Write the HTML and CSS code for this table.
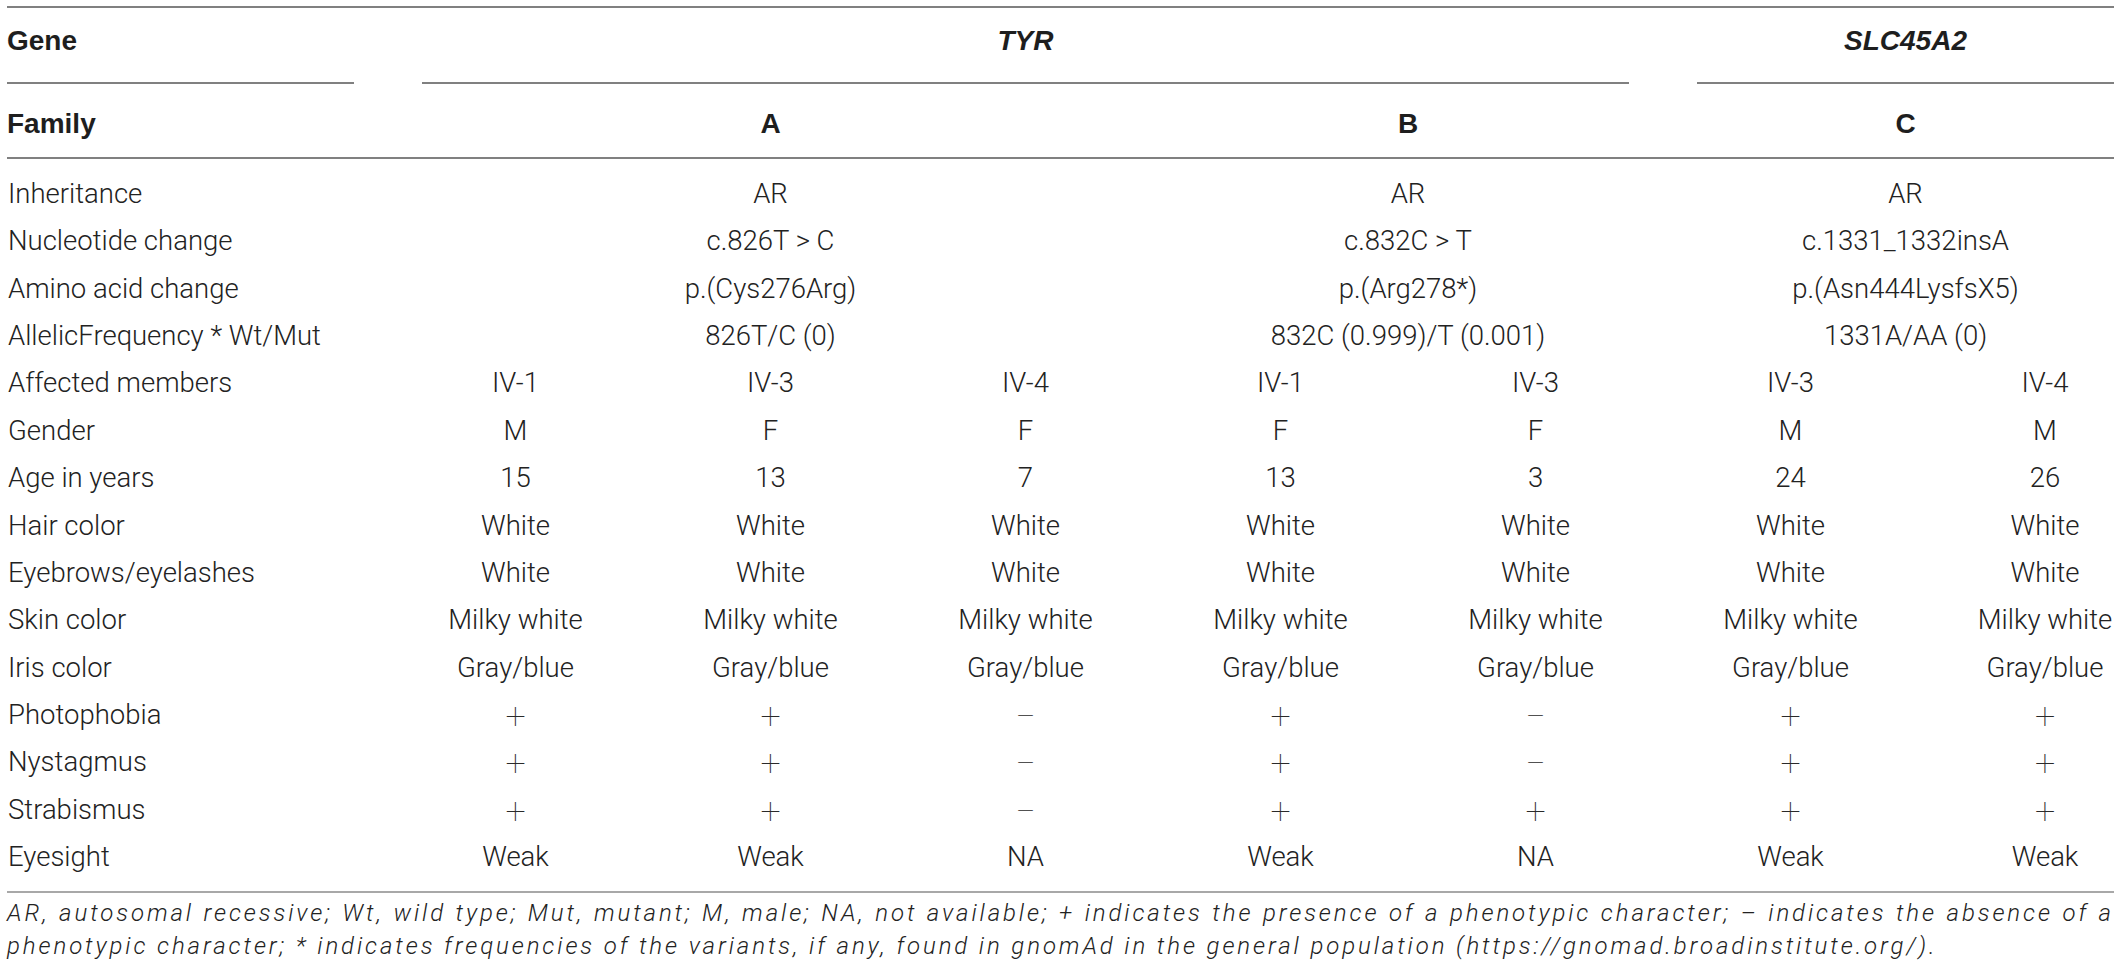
FILE: index.html
```html
<!DOCTYPE html>
<html>
<head>
<meta charset="UTF-8">
<title>Table 1 / Clinical and genetic features</title>
<link rel="stylesheet" href="styles.css">
</head>
<body>
	<div id="page">
		<table class="tableau">
			<colgroup>
				<col class="col_label">
				<col class="col_data">
				<col class="col_data">
				<col class="col_data">
				<col class="col_data">
				<col class="col_data">
				<col class="col_data">
				<col class="col_last">
			</colgroup>
			<thead>
				<tr class="ligne_gene">
					<th class="premier"><div class="filet">Gene</div></th>
					<th colspan="5"><div class="filet centre"><i>TYR</i></div></th>
					<th colspan="2" class="dernier"><div class="filet centre"><i>SLC45A2</i></div></th>
				</tr>
				<tr class="ligne_famille">
					<th class="premier">Family</th>
					<th colspan="3" class="centre">A</th>
					<th colspan="2" class="centre">B</th>
					<th colspan="2" class="centre fusion_c">C</th>
				</tr>
			</thead>
			<tbody>
				<tr class="debut">
					<td>Inheritance</td>
					<td colspan="3">AR</td>
					<td colspan="2">AR</td>
					<td colspan="2" class="fusion_c">AR</td>
				</tr>
				<tr>
					<td>Nucleotide change</td>
					<td colspan="3">c.826T &gt; C</td>
					<td colspan="2">c.832C &gt; T</td>
					<td colspan="2" class="fusion_c">c.1331_1332insA</td>
				</tr>
				<tr>
					<td>Amino acid change</td>
					<td colspan="3">p.(Cys276Arg)</td>
					<td colspan="2">p.(Arg278*)</td>
					<td colspan="2" class="fusion_c">p.(Asn444LysfsX5)</td>
				</tr>
				<tr>
					<td>AllelicFrequency * Wt/Mut</td>
					<td colspan="3">826T/C (0)</td>
					<td colspan="2">832C (0.999)/T (0.001)</td>
					<td colspan="2" class="fusion_c">1331A/AA (0)</td>
				</tr>
				<tr>
					<td>Affected members</td>
					<td>IV-1</td><td>IV-3</td><td>IV-4</td><td>IV-1</td><td>IV-3</td><td>IV-3</td><td class="der">IV-4</td>
				</tr>
				<tr>
					<td>Gender</td>
					<td>M</td><td>F</td><td>F</td><td>F</td><td>F</td><td>M</td><td class="der">M</td>
				</tr>
				<tr>
					<td>Age in years</td>
					<td>15</td><td>13</td><td>7</td><td>13</td><td>3</td><td>24</td><td class="der">26</td>
				</tr>
				<tr>
					<td>Hair color</td>
					<td>White</td><td>White</td><td>White</td><td>White</td><td>White</td><td>White</td><td class="der">White</td>
				</tr>
				<tr>
					<td>Eyebrows/eyelashes</td>
					<td>White</td><td>White</td><td>White</td><td>White</td><td>White</td><td>White</td><td class="der">White</td>
				</tr>
				<tr>
					<td>Skin color</td>
					<td>Milky white</td><td>Milky white</td><td>Milky white</td><td>Milky white</td><td>Milky white</td><td>Milky white</td><td class="der">Milky white</td>
				</tr>
				<tr>
					<td>Iris color</td>
					<td>Gray/blue</td><td>Gray/blue</td><td>Gray/blue</td><td>Gray/blue</td><td>Gray/blue</td><td>Gray/blue</td><td class="der">Gray/blue</td>
				</tr>
				<tr>
					<td>Photophobia</td>
					<td><span class="signe">+</span></td><td><span class="signe">+</span></td><td><span class="signe">&minus;</span></td><td><span class="signe">+</span></td><td><span class="signe">&minus;</span></td><td><span class="signe">+</span></td><td class="der"><span class="signe">+</span></td>
				</tr>
				<tr>
					<td>Nystagmus</td>
					<td><span class="signe">+</span></td><td><span class="signe">+</span></td><td><span class="signe">&minus;</span></td><td><span class="signe">+</span></td><td><span class="signe">&minus;</span></td><td><span class="signe">+</span></td><td class="der"><span class="signe">+</span></td>
				</tr>
				<tr>
					<td>Strabismus</td>
					<td><span class="signe">+</span></td><td><span class="signe">+</span></td><td><span class="signe">&minus;</span></td><td><span class="signe">+</span></td><td><span class="signe">+</span></td><td><span class="signe">+</span></td><td class="der"><span class="signe">+</span></td>
				</tr>
				<tr class="fin">
					<td>Eyesight</td>
					<td>Weak</td><td>Weak</td><td>NA</td><td>Weak</td><td>NA</td><td>Weak</td><td class="der">Weak</td>
				</tr>
			</tbody>
		</table>

		<p class="note">
			<span class="note_ligne1">AR, autosomal recessive; Wt, wild type; Mut, mutant; M, male; NA, not available; + indicates the presence of a phenotypic character; &ndash; indicates the absence of a</span>
			<span>phenotypic character; * indicates frequencies of the variants, if any, found in gnomAd in the general population (https://gnomad.broadinstitute.org/).</span>
		</p>
	</div>
</body>
</html>
```

FILE: styles.css
```css
html
{
	background : #fff;
}

body
{
	margin : 0;
	font : 300 27.5px Roboto, "Liberation Sans", sans-serif;
	color : #222;
}

div#page
{
	padding : 6px 6px 0 7px;
}

/* tableau principal */

table.tableau
{
	width : 2107px;
	table-layout : fixed;
	border-collapse : separate;
	border-spacing : 0;
	border-top : 2px solid #808080;
}

col.col_label
{
	width : 381px;
}

col.col_data
{
	width : 255px;
}

col.col_last
{
	width : 196px;
}

th
{
	font : bold 28px "Liberation Sans", Arial, sans-serif;
	color : #1e1e1e;
	text-align : left;
	padding : 0;
	vertical-align : middle;
}

th.centre, .centre
{
	text-align : center;
}

/* ligne Gene : filets interrompus sous chaque groupe */

tr.ligne_gene th
{
	padding : 0 34px;
}

tr.ligne_gene th.premier
{
	padding : 0 34px 0 0;
}

tr.ligne_gene th.dernier
{
	padding : 0 0 0 34px;
}

div.filet
{
	box-sizing : border-box;
	height : 76px;
	padding-bottom : 8px;
	display : flex;
	align-items : center;
	border-bottom : 2px solid #808080;
}

div.filet.centre
{
	justify-content : center;
}

tr.ligne_famille th
{
	line-height : 67px;
	padding-top : 6px;
	border-bottom : 2px solid #808080;
}

tr.ligne_famille th.fusion_c
{
	padding-left : 34px;
}

/* corps */

td
{
	padding : 0;
	line-height : 47.36px;
	text-align : center;
	white-space : nowrap;
}

td:first-child
{
	text-align : left;
	padding-left : 1px;
}

td.fusion_c
{
	padding-left : 34px;
}

td.der
{
	padding-left : 58px;
}

tr.debut td
{
	padding-top : 11px;
}

tr.fin td
{
	padding-bottom : 11px;
	border-bottom : 2px solid #a8a8a8;
}

span.signe
{
	font-size : 36px;
	font-weight : 100;
	color : #2a2a2a;
	line-height : 0;
	vertical-align : -5px;
}

/* note de bas de tableau */

p.note
{
	margin : 4px 0 0 0;
	font : italic 300 24px Roboto, "Liberation Sans", sans-serif;
	letter-spacing : 2.9px;
	line-height : 33px;
	color : #222;
}

p.note span
{
	display : block;
	white-space : nowrap;
}

p.note span.note_ligne1
{
	white-space : normal;
	text-align : justify;
	text-align-last : justify;
}
```
